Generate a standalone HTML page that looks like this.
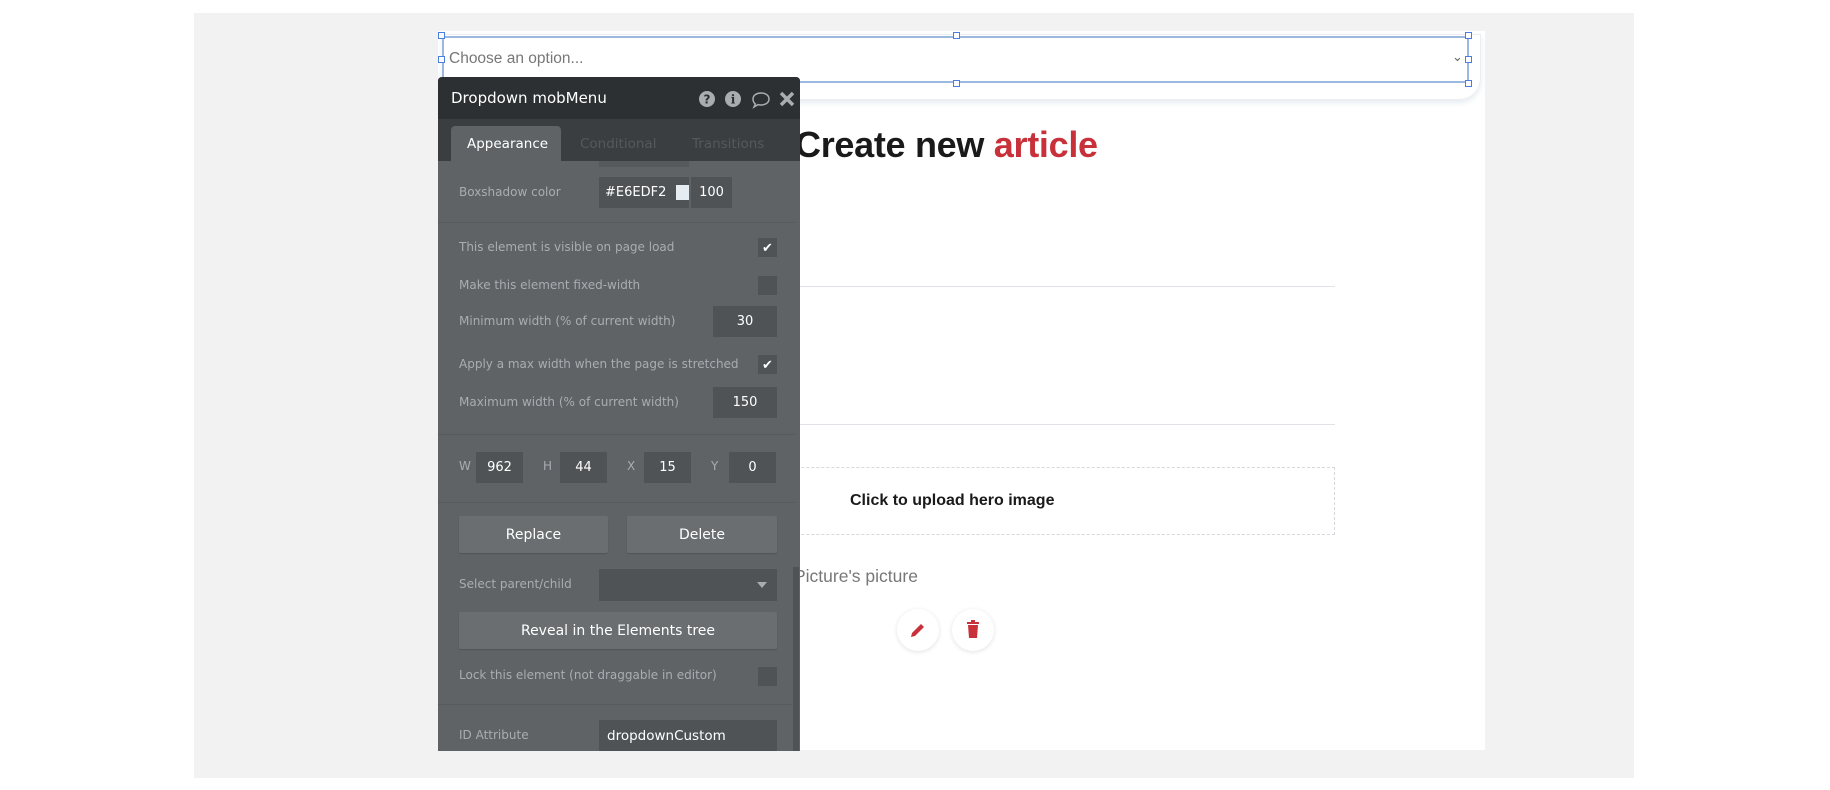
<!DOCTYPE html>
<html><head><meta charset="utf-8"><style>
*{box-sizing:border-box;margin:0;padding:0}
body{width:1830px;height:790px;background:#fff;position:relative;overflow:hidden;font-family:"Liberation Sans",sans-serif}
.a{position:absolute}
.p{font-family:"DejaVu Sans","Liberation Sans",sans-serif;font-size:12px;color:#a9adb0}
.inp{position:absolute;background:#4f5356;color:#fff;font-family:"DejaVu Sans",sans-serif;font-size:13px;display:flex;align-items:center;justify-content:center}
.cb{position:absolute;width:19px;height:19px;background:#4f5356;color:#fff;font-size:13px;text-align:center;line-height:19px}
.btn{position:absolute;background:#6a6e71;color:#fff;font-family:"DejaVu Sans",sans-serif;font-size:14px;display:flex;align-items:center;justify-content:center;border-radius:2px;box-shadow:0 1px 1px rgba(0,0,0,.15)}
.sep{position:absolute;left:438px;width:357px;height:1px;background:#575b5e}
.h{position:absolute;width:7px;height:7px;border:1px solid #4a7ee0;background:#fff}
</style></head><body>
<div class="a" style="left:194px;top:13px;width:1440px;height:765px;background:#f2f2f2"></div>
<div class="a" style="left:438px;top:31px;width:1047px;height:719px;background:#fff"></div>
<div class="a" style="left:442px;top:34px;width:1039px;height:66px;border-radius:0 0 22px 0;border:1px solid #eceef1;box-shadow:0 3px 6px #e6edf2"></div>
<div class="a" style="left:442px;top:36px;width:1027px;height:47px;border:2px solid #9cb8de;background:#fff"></div>
<div class="a" style="left:449px;top:50px;font-size:15.5px;color:#777">Choose an option...</div>
<div class="a" style="left:1452px;top:49px;font-size:13px;color:#666">&#8964;</div>
<div class="h" style="left:438px;top:32px"></div><div class="h" style="left:953px;top:32px"></div><div class="h" style="left:1465px;top:32px"></div>
<div class="h" style="left:438px;top:56px"></div><div class="h" style="left:1465px;top:56px"></div>
<div class="h" style="left:953px;top:80px"></div><div class="h" style="left:1465px;top:80px"></div>
<div class="a" style="left:795px;top:124px;font-size:36px;font-weight:bold;color:#1a1a1a;letter-spacing:-0.3px">Create new <span style="color:#c8303a">article</span></div>
<div class="a" style="left:799px;top:286px;width:536px;height:1px;background:#dfe3e7"></div>
<div class="a" style="left:799px;top:424px;width:536px;height:1px;background:#dfe3e7"></div>
<div class="a" style="left:561px;top:467px;width:774px;height:68px;border:1px dashed #d5d8dc"></div>
<div class="a" style="left:850px;top:492px;font-size:16px;font-weight:bold;color:#1a1a1a">Click to upload hero image</div>
<div class="a" style="left:794px;top:566px;font-size:17.5px;color:#777">Picture's picture</div>
<div class="a" style="left:897px;top:609px;width:42px;height:42px;border-radius:50%;background:#fff;box-shadow:0 1px 5px rgba(0,0,0,.12)"></div>
<div class="a" style="left:952px;top:609px;width:42px;height:42px;border-radius:50%;background:#fff;box-shadow:0 1px 5px rgba(0,0,0,.12)"></div>
<svg class="a" style="left:909px;top:621px" width="18" height="18" viewBox="0 0 18 18"><path d="M2 16l1-4L12 3l3 3-9 9z" fill="#c8303a"/></svg>
<svg class="a" style="left:965px;top:620px" width="16" height="20" viewBox="0 0 16 20"><rect x="2" y="2" width="12" height="2" fill="#c8303a"/><rect x="6" y="0" width="4" height="2" fill="#c8303a"/><path d="M3 5h10l-1 13H4z" fill="#c8303a"/></svg>
<div class="a" style="left:438px;top:77px;width:362px;height:674px;background:#5f6366;border-radius:4px 4px 0 0;overflow:hidden">
 <div class="a" style="left:0;top:0;width:362px;height:42px;background:#2c3032"></div>
 <div class="a" style="left:0;top:42px;width:362px;height:42px;background:#3a3e41"></div>
 <div class="a" style="left:13px;top:49px;width:110px;height:36px;background:#5f6366;border-radius:4px 4px 0 0"></div>
 <div class="a" style="left:161px;top:84px;width:90px;height:6px;background:#55595c"></div>
</div>
<div class="a" style="left:451px;top:89px;font-family:'DejaVu Sans',sans-serif;font-size:15px;color:#fff">Dropdown mobMenu</div>
<svg class="a" style="left:698px;top:90px" width="100" height="20" viewBox="0 0 100 20">
 <circle cx="9" cy="9" r="8" fill="#a9adb0"/><text x="9" y="13.5" font-size="12" font-weight="bold" text-anchor="middle" fill="#2c3032" font-family="DejaVu Sans">?</text>
 <circle cx="35" cy="9" r="8" fill="#a9adb0"/><text x="35" y="13.5" font-size="12" font-weight="bold" text-anchor="middle" fill="#2c3032" font-family="DejaVu Serif">i</text>
 <path d="M55 9c0-4 4-6 8-6s8 2 8 6-4 6-8 6c-1 0-2 0-3-.4L56 17l1.3-3C56 13 55 11 55 9z" fill="none" stroke="#a9adb0" stroke-width="1.5"/>
 <path d="M83 3l12 12M95 3L83 15" stroke="#a9adb0" stroke-width="3.5"/>
</svg>
<div class="a" style="left:467px;top:136px;font-family:'DejaVu Sans',sans-serif;font-size:13.5px;color:#fff">Appearance</div>
<div class="a" style="left:580px;top:136px;font-family:'DejaVu Sans',sans-serif;font-size:13.5px;color:#55595c">Conditional</div>
<div class="a" style="left:692px;top:136px;font-family:'DejaVu Sans',sans-serif;font-size:13.5px;color:#55595c">Transitions</div>

<div class="a p" style="left:459px;top:185px">Boxshadow color</div>
<div class="inp" style="left:599px;top:177px;width:90px;height:31px;justify-content:flex-start;padding-left:6px">#E6EDF2<span style="display:inline-block;width:15px;height:15px;background:#e6edf2;margin-left:10px"></span></div>
<div class="inp" style="left:691px;top:177px;width:41px;height:31px">100</div>
<div class="sep" style="top:222px"></div>
<div class="a p" style="left:459px;top:240px">This element is visible on page load</div><div class="cb" style="left:758px;top:238px">&#10004;</div>
<div class="a p" style="left:459px;top:278px">Make this element fixed-width</div><div class="cb" style="left:758px;top:276px"></div>
<div class="a p" style="left:459px;top:314px">Minimum width (% of current width)</div><div class="inp" style="left:713px;top:306px;width:64px;height:31px">30</div>
<div class="a p" style="left:459px;top:357px">Apply a max width when the page is stretched</div><div class="cb" style="left:758px;top:355px">&#10004;</div>
<div class="a p" style="left:459px;top:395px">Maximum width (% of current width)</div><div class="inp" style="left:713px;top:387px;width:64px;height:31px">150</div>
<div class="sep" style="top:434px"></div>
<div class="a p" style="left:459px;top:459px">W</div><div class="inp" style="left:476px;top:452px;width:47px;height:31px">962</div>
<div class="a p" style="left:543px;top:459px">H</div><div class="inp" style="left:560px;top:452px;width:47px;height:31px">44</div>
<div class="a p" style="left:627px;top:459px">X</div><div class="inp" style="left:644px;top:452px;width:47px;height:31px">15</div>
<div class="a p" style="left:711px;top:459px">Y</div><div class="inp" style="left:729px;top:452px;width:47px;height:31px">0</div>
<div class="sep" style="top:502px"></div>
<div class="btn" style="left:459px;top:516px;width:149px;height:37px">Replace</div>
<div class="btn" style="left:627px;top:516px;width:150px;height:37px">Delete</div>
<div class="a p" style="left:459px;top:577px">Select parent/child</div>
<div class="inp" style="left:599px;top:569px;width:178px;height:32px"></div>
<div class="a" style="left:757px;top:582px;border:5px solid transparent;border-top:6px solid #a9adb0"></div>
<div class="btn" style="left:459px;top:612px;width:318px;height:37px">Reveal in the Elements tree</div>
<div class="a p" style="left:459px;top:668px">Lock this element (not draggable in editor)</div><div class="cb" style="left:758px;top:667px"></div>
<div class="sep" style="top:704px"></div>
<div class="a p" style="left:459px;top:728px">ID Attribute</div>
<div class="inp" style="left:599px;top:720px;width:178px;height:31px;justify-content:flex-start;padding-left:8px;font-size:13.5px">dropdownCustom</div>
<div class="a" style="left:793px;top:567px;width:6px;height:184px;background:#4f5356"></div>
</body></html>
